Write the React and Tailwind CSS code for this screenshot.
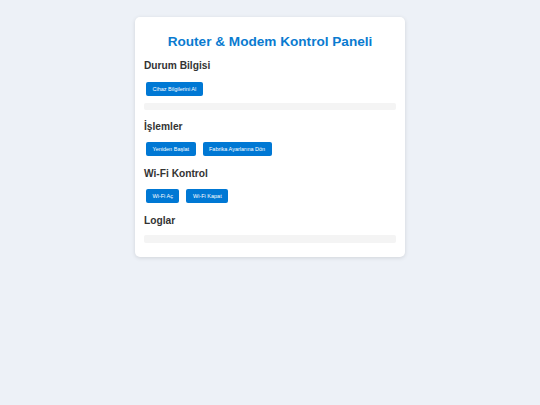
import React from 'react';

const FONT = { fontFamily: '"Liberation Sans", Arial, sans-serif' };

const Btn = ({ children }) => (
  <button
    type="button"
    className="h-[14px] px-[6.5px] rounded-[2px] bg-[#0078d4] text-white text-[5.5px] leading-[14px] whitespace-nowrap"
  >
    {children}
  </button>
);

const Heading = ({ children, className = '' }) => (
  <h2 className={`text-[10.2px] leading-[13px] font-bold text-[#333] ${className}`}>{children}</h2>
);

export default function App() {
  return (
    <div className="min-h-[405px] w-full bg-[#edf1f7] pt-[17px]" style={FONT}>
      <div className="mx-auto w-[270px] bg-white rounded-[5px] shadow-[0_1px_4px_rgba(0,0,0,0.12)] px-[9px] pt-[15.5px] pb-[14px]">
        <h1 className="text-center text-[13.6px] leading-[17px] font-bold text-[#0a7bd0]">
          Router &amp; Modem Kontrol Paneli
        </h1>

        <Heading className="mt-[9.4px]">Durum Bilgisi</Heading>
        <div className="flex gap-[7px] pl-[2px] mt-[10px]">
          <Btn>Cihaz Bilgilerini Al</Btn>
        </div>
        <div className="mt-[7px] h-[7.5px] rounded-[2px] bg-[#f4f4f4]" />

        <Heading className="mt-[9.7px]">İşlemler</Heading>
        <div className="flex gap-[7px] pl-[2px] mt-[9px]">
          <Btn>Yeniden Başlat</Btn>
          <Btn>Fabrika Ayarlarına Dön</Btn>
        </div>

        <Heading className="mt-[11px]">Wi-Fi Kontrol</Heading>
        <div className="flex gap-[7px] pl-[2px] mt-[9px]">
          <Btn>Wi-Fi Aç</Btn>
          <Btn>Wi-Fi Kapat</Btn>
        </div>

        <Heading className="mt-[11px]">Loglar</Heading>
        <div className="mt-[8px] h-[7.5px] rounded-[2px] bg-[#f4f4f4]" />
      </div>
    </div>
  );
}
